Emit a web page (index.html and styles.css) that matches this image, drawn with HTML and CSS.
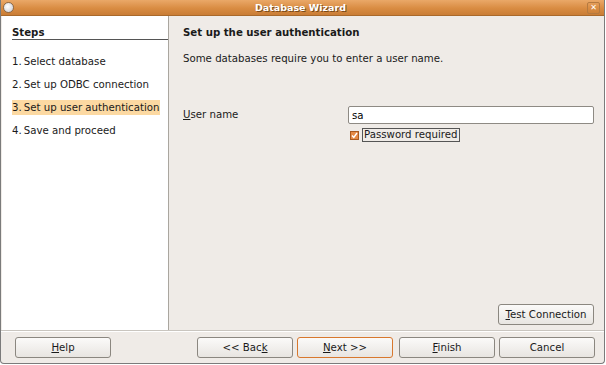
FILE: index.html
```html
<!DOCTYPE html>
<html lang="en">

<head>
    <meta charset="UTF-8">
    <title>Database Wizard</title>
    <link rel="stylesheet" href="styles.css">
</head>

<body>
    <div class="window">
        <!-- Barre de titre -->
        <div class="titlebar">
            <span class="title-icon"></span>
            <span class="title">Database Wizard</span>
            <span class="close">&#x2715;</span>
        </div>

        <div class="content">
            <!-- Liste des étapes -->
            <div class="steps">
                <div class="steps-title">Steps</div>
                <ul>
                    <li>1.&#8201;Select database</li>
                    <li>2.&#8201;Set up ODBC connection</li>
                    <li class="active">3.&#8201;Set up user authentication</li>
                    <li>4.&#8201;Save and proceed</li>
                </ul>
            </div>

            <!-- Page courante -->
            <div class="page">
                <h2>Set up the user authentication</h2>
                <p>Some databases require you to enter a user name.</p>
                <div class="field">
                    <label><u>U</u>ser name</label>
                    <div class="field-controls">
                        <input type="text" value="sa">
                        <div class="check">
                            <svg class="box" width="9" height="9" viewBox="0 0 9 9">
                                <rect x="0.5" y="0.5" width="8" height="8" fill="#e58a45" stroke="#a85a20"/>
                                <path d="M2 4.5 L3.8 6.5 L7 2" fill="none" stroke="#ffffff" stroke-width="1.4"/>
                            </svg>
                            <span class="check-label">Password required</span>
                        </div>
                    </div>
                </div>
                <div class="page-bottom">
                    <button><u>T</u>est Connection</button>
                </div>
            </div>
        </div>

        <!-- Boutons -->
        <div class="footer">
            <button class="help"><u>H</u>elp</button>
            <div class="nav">
                <button>&lt;&lt; Bac<u>k</u></button>
                <button class="default"><u>N</u>ext &gt;&gt;</button>
                <button><u>F</u>inish</button>
                <button>Cancel</button>
            </div>
        </div>
    </div>
</body>

</html>
```

FILE: styles.css
```css
body {
    margin: 0;
    padding: 0;
    background-color: #ffffff;
    font-family: "DejaVu Sans", sans-serif;
    font-size: 10.2px;
    color: #1a1a1a;
}

/* Fenêtre */
.window {
    width: 603px;
    height: 363px;
    border: 1px solid #7b7b7b;
    border-top: none;
    border-radius: 0 0 4px 4px;
    background-color: #efebe7;
    display: flex;
    flex-direction: column;
    overflow: hidden;
}

/* Barre de titre */
.titlebar {
    height: 15px;
    background: linear-gradient(#eaa868, #d98c42 55%, #c97d36);
    border-bottom: 1px solid #a9692b;
    display: flex;
    align-items: center;
    padding: 0 5px 0 3px;
    margin: 0 -1px;
}

.title-icon {
    width: 9px;
    height: 9px;
    border-radius: 50%;
    background: radial-gradient(circle at 40% 40%, #ffffff, #c8c8d0);
    border: 1px solid #8a6a4a;
}

.title {
    flex: 1;
    text-align: center;
    color: #ffffff;
    font-size: 9.5px;
    font-weight: bold;
    text-shadow: 1px 1px 0 #7a4a1a;
}

.close {
    width: 11px;
    height: 10px;
    border: 1px solid #b57a40;
    border-radius: 2px;
    color: #ffffff;
    font-size: 8px;
    line-height: 10px;
    text-align: center;
    font-weight: bold;
}

.content {
    flex: 1;
    display: flex;
    border-bottom: 1px solid #c9c5bf;
}

/* Étapes */
.steps {
    width: 156px;
    background-color: #ffffff;
    border-right: 1px solid #aaa69f;
    margin-left: 1px;
    padding: 11px 0 0 10px;
}

.steps-title {
    font-weight: bold;
    border-bottom: 1px solid #555;
    padding-bottom: 1px;
}

.steps ul {
    list-style: none;
    margin: 14px 0 0;
    padding: 0;
}

.steps li {
    height: 15px;
    line-height: 15px;
    margin-bottom: 8px;
    width: 148px;
    white-space: nowrap;
}

.steps li.active {
    background-color: #fcd9a2;
}

/* Page */
.page {
    flex: 1;
    padding: 11px 10px 5px 14px;
    display: flex;
    flex-direction: column;
}

h2 {
    margin: 0;
    font-size: 10.2px;
    font-weight: bold;
}

p {
    margin: 15px 0 0;
}

.field {
    display: flex;
    margin-top: 42px;
}

.field label {
    width: 165px;
    margin-top: 3px;
}

.field-controls {
    flex: 1;
}

input[type="text"] {
    display: block;
    width: 100%;
    box-sizing: border-box;
    height: 18px;
    border: 1px solid #8e8a84;
    border-radius: 2px;
    font-family: "DejaVu Sans", sans-serif;
    font-size: 10.2px;
    padding: 0 3px;
    margin: 0;
}

.check {
    display: flex;
    align-items: center;
    margin-top: 4px;
    margin-left: 2px;
}

.box {
    margin-right: 3px;
}

.check-label {
    border: 1px solid #555;
    padding: 0 1px;
    line-height: 12px;
}

.page-bottom {
    margin-top: auto;
    display: flex;
    justify-content: flex-end;
}

/* Boutons */
button {
    width: 96px;
    height: 21px;
    background: linear-gradient(#fbfaf9, #e8e5e1);
    border: 1px solid #8b8780;
    border-radius: 3px;
    font-family: "DejaVu Sans", sans-serif;
    font-size: 10.2px;
    color: #1a1a1a;
    padding: 0;
}

.footer {
    height: 31px;
    display: flex;
    align-items: center;
    justify-content: space-between;
    padding: 0 9px 0 14px;
    border-top: 1px solid #ffffff;
}

.nav {
    display: flex;
    gap: 4px;
}

.nav button.default {
    border-color: #d8782e;
    margin-right: 2px;
}
```
